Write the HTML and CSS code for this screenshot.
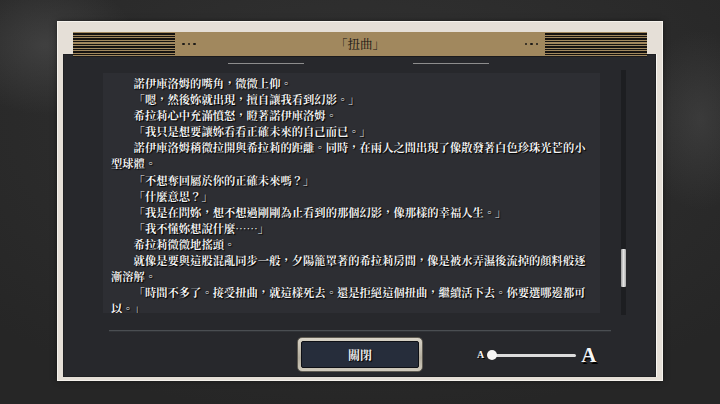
FILE: index.html
```html
<!DOCTYPE html>
<html lang="zh-Hant">
<head>
<meta charset="utf-8">
<title>扭曲</title>
<link rel="stylesheet" href="styles.css">
</head>
<body>
<div class="frame">
  <div class="header">
    <div class="stripes"></div>
    <div class="dots"><i></i><i></i><i></i></div>
    <div class="title">「扭曲」</div>
    <div class="dots"><i></i><i></i><i></i></div>
    <div class="stripes"></div>
  </div>
  <div class="panel">
    <div class="deco"><span></span><span></span></div>
    <div class="middle">
      <div class="textarea">
        <p>諾伊庫洛姆的嘴角，微微上仰。</p>
        <p>「嗯，然後妳就出現，擅自讓我看到幻影。」</p>
        <p>希拉莉心中充滿憤怒，瞪著諾伊庫洛姆。</p>
        <p>「我只是想要讓妳看看正確未來的自己而已。」</p>
        <p>諾伊庫洛姆稍微拉開與希拉莉的距離。同時，在兩人之間出現了像散發著白色珍珠光芒的小型球體。</p>
        <p>「不想奪回屬於你的正確未來嗎？」</p>
        <p>「什麼意思？」</p>
        <p>「我是在問妳，想不想過剛剛為止看到的那個幻影，像那樣的幸福人生。」</p>
        <p>「我不懂妳想說什麼……」</p>
        <p>希拉莉微微地搖頭。</p>
        <p>就像是要與這股混亂同步一般，夕陽籠罩著的希拉莉房間，像是被水弄濕後流掉的顏料般逐漸溶解。</p>
        <p>「時間不多了。接受扭曲，就這樣死去。還是拒絕這個扭曲，繼續活下去。你要選哪邊都可以。」</p>
      </div>
      <div class="scrollbar"><div class="thumb"></div></div>
    </div>
    <div class="sep"></div>
    <div class="bottom">
      <button class="close"><span>關閉</span></button>
      <div class="slider">
        <span class="a-small">A</span>
        <span class="track"><span class="knob"></span></span>
        <span class="a-big">A</span>
      </div>
    </div>
  </div>
</div>
</body>
</html>
```
FILE: styles.css
```css
html, body {
  margin: 0;
  padding: 0;
}
body {
  width: 720px;
  height: 404px;
  box-sizing: border-box;
  padding: 22px 58px 0 58px;
  overflow: hidden;
  background:
    radial-gradient(ellipse 90px 70px at 45px 45px, rgba(90,90,90,0.45), rgba(90,90,90,0) 100%),
    radial-gradient(ellipse 60px 90px at 700px 120px, rgba(90,90,90,0.35), rgba(90,90,90,0) 100%),
    radial-gradient(ellipse 500px 300px at 360px 120px, #333333, #262626 100%);
  font-family: "Noto Serif CJK JP", "Noto Sans CJK JP", "Liberation Serif", serif;
}
.frame {
  height: 358px;
  box-sizing: border-box;
  padding: 10px 6px 3px 5px;
  background: #e5dfd7;
  box-shadow: 0 0 0 1px #f5f2ec, 0 0 6px rgba(0,0,0,0.6);
  display: flex;
  flex-direction: column;
}
.header {
  position: relative;
  z-index: 1;
  height: 24px;
  margin: 0 9px -2px 10px;
  background: #a1885e;
  display: flex;
  align-items: center;
  box-shadow: 0 1px 0 #1b1b1d;
}
.stripes {
  width: 102px;
  height: 24px;
  background: repeating-linear-gradient(to bottom, #a1885e 0, #a1885e 1.2px, #151311 1.2px, #151311 2.6px);
}
.dots {
  display: flex;
  gap: 3px;
  margin: 0 7px;
}
.dots i {
  display: block;
  width: 2.5px;
  height: 2.5px;
  background: #1c1a17;
  border-radius: 50%;
}
.title {
  flex: 1;
  text-align: center;
  font-size: 12.5px;
  color: #171512;
  line-height: 24px;
}
.panel {
  height: 323px;
  background: #27282c;
  box-shadow: inset 0 0 0 1px #1f2023, 1px 0 0 #f8f6f2;
  display: flex;
  flex-direction: column;
}
.deco {
  display: flex;
  justify-content: center;
  gap: 109px;
  margin-top: 9px;
  padding-right: 0;
  margin-left: -3px;
}
.deco span {
  display: block;
  width: 76px;
  height: 1px;
  background: #8d8d8d;
}
.middle {
  display: flex;
  margin-top: 9px;
  padding-left: 40px;
}
.textarea {
  width: 497px;
  height: 240px;
  box-sizing: border-box;
  padding: 2px 9px 0 8px;
  background: #2d2e33;
  overflow: hidden;
  color: #f3f3f3;
  font-size: 11.3px;
  line-height: 16.1px;
  font-weight: 700;
  text-shadow: 1px 1px 1px #000, 0 0 1px #000;
}
.textarea p {
  margin: 0;
  text-indent: 2em;
}
.scrollbar {
  width: 5px;
  margin: -3px 0 -2px 21px;
  background: #1d1e21;
  position: relative;
  display: flex;
  flex-direction: column;
}
.thumb {
  margin-top: 179px;
  height: 38px;
  background: linear-gradient(to right, #9c9c9c, #e4e4e4 50%, #a8a8a8);
  border-radius: 1px;
}
.sep {
  margin: 17px 0 0 46px;
  width: 502px;
  height: 1px;
  background: #4a4e52;
  box-shadow: 0 1px 0 #303236;
}
.bottom {
  display: flex;
  align-items: center;
  margin-top: 6px;
  padding-left: 234px;
}
.close {
  width: 126px;
  height: 35px;
  padding: 3px;
  box-sizing: border-box;
  border: 1px solid #5f5b52;
  border-radius: 5px;
  background: linear-gradient(to bottom, #d9d4c8, #b4ae9f 60%, #cfcabd);
  display: flex;
}
.close span {
  flex: 1;
  display: flex;
  align-items: center;
  justify-content: center;
  background: #262d3b;
  border: 1px solid #0e1016;
  border-radius: 2px;
  color: #f0f0f0;
  font-family: "Noto Serif CJK JP", "Noto Sans CJK JP", serif;
  font-size: 12px;
  font-weight: 700;
  text-shadow: 1px 1px 1px #000;
}
.slider {
  display: flex;
  align-items: center;
  margin-left: 54px;
  margin-top: 1px;
}
.a-small {
  font-family: "Liberation Serif", serif;
  font-weight: 700;
  font-size: 10px;
  color: #f4f4f4;
  text-shadow: 1px 1px 0 #000;
  line-height: 10px;
}
.track {
  position: relative;
  width: 88px;
  height: 3px;
  margin-left: 4px;
  background: #dcdcdc;
  border-radius: 2px;
}
.knob {
  position: absolute;
  left: -1px;
  top: -3.5px;
  width: 10px;
  height: 10px;
  border-radius: 50%;
  background: #f6f6f6;
}
.a-big {
  margin-left: 5px;
  font-family: "Liberation Serif", serif;
  font-weight: 700;
  font-size: 21px;
  color: #f6f6f6;
  text-shadow: 1.5px 1.5px 0 #000;
  line-height: 20px;
  margin-top: -1px;
}
```
